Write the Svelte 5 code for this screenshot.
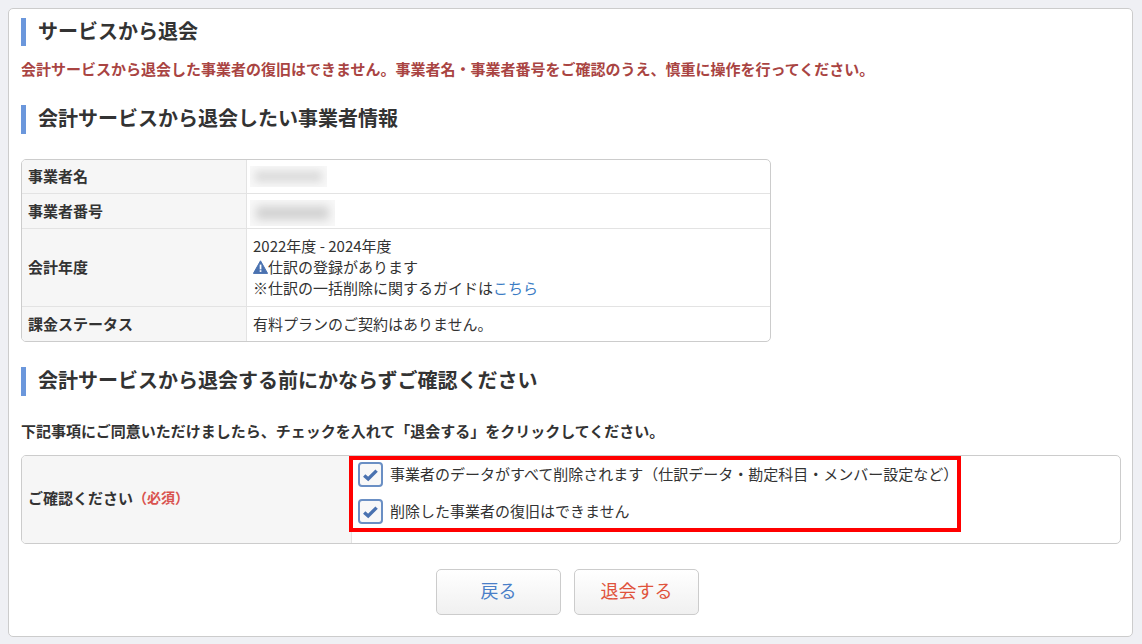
<script>
  const info = [
    { label: '事業者名', blur: 'name' },
    { label: '事業者番号', blur: 'num' }
  ];
  const checks = [
    '事業者のデータがすべて削除されます（仕訳データ・勘定科目・メンバー設定など）',
    '削除した事業者の復旧はできません'
  ];
</script>

<div class="page">
  <main class="card">
    <h2 class="title first">サービスから退会</h2>
    <p class="warn">会計サービスから退会した事業者の復旧はできません。事業者名・事業者番号をご確認のうえ、慎重に操作を行ってください。</p>

    <h2 class="title second">会計サービスから退会したい事業者情報</h2>

    <div class="info">
      {#each info as row}
        <div class="row {row.blur}">
          <div class="th">{row.label}</div>
          <div class="td"><div class="blurred"></div></div>
        </div>
      {/each}
      <div class="row year">
        <div class="th">会計年度</div>
        <div class="td lines">
          <div>2022年度 - 2024年度</div>
          <div class="alert">
            <svg width="15" height="14" viewBox="0 0 15 14" aria-hidden="true">
              <path d="M7.5 0.8 14.6 13.4H0.4Z" fill="#4a72b0" stroke="#4a72b0" stroke-linejoin="round" />
              <rect x="6.7" y="4.6" width="1.7" height="4.8" fill="#fff" />
              <rect x="6.7" y="10.2" width="1.7" height="1.7" fill="#fff" />
            </svg>仕訳の登録があります
          </div>
          <div>※仕訳の一括削除に関するガイドは<a href="#guide">こちら</a></div>
        </div>
      </div>
      <div class="row bill">
        <div class="th">課金ステータス</div>
        <div class="td">有料プランのご契約はありません。</div>
      </div>
    </div>

    <h2 class="title third">会計サービスから退会する前にかならずご確認ください</h2>
    <p class="lead">下記事項にご同意いただけましたら、チェックを入れて「退会する」をクリックしてください。</p>

    <div class="confirm">
      <div class="th">ご確認ください<span class="req">（必須）</span></div>
      <div class="td">
        <div class="highlight"></div>
        {#each checks as text}
          <label class="check">
            <input type="checkbox" checked />
            <span class="box">
              <svg width="17" height="14" viewBox="0 0 17 14" aria-hidden="true">
                <path d="M2.2 7.4 6.2 11 14.6 2.6" fill="none" stroke="#4a72b0" stroke-width="3.4" />
              </svg>
            </span>
            <span class="check-text">{text}</span>
          </label>
        {/each}
      </div>
    </div>

    <div class="actions">
      <button class="btn back">戻る</button>
      <button class="btn leave">退会する</button>
    </div>
  </main>
</div>

<style>
  :global(body) {
    margin: 0;
    background: #eff0f4;
  }

  .page {
    padding: 8px 9px 7px 8px;
    font-family: "Noto Sans CJK JP", sans-serif;
    font-size: 15px;
    line-height: 21px;
    color: #333;
  }

  .card {
    box-sizing: border-box;
    height: 629px;
    padding: 9px 11px 0 12px;
    background: #fff;
    border: 1px solid #ccc;
    border-radius: 5px;
  }

  .title {
    margin: 0;
    padding: 0 0 3px 12px;
    border-left: 5px solid #6b97dc;
    font-size: 20px;
    line-height: 26px;
    font-weight: 700;
    color: #333;
  }

  .first {
    padding-bottom: 2px;
  }

  .warn {
    margin: 12px 0 0;
    font-weight: 700;
    color: #a94442;
    white-space: nowrap;
  }

  .second {
    margin-top: 26px;
  }

  .info {
    box-sizing: border-box;
    width: 750px;
    margin-top: 25px;
    border: 1px solid #ccc;
    border-radius: 5px;
    overflow: hidden;
  }

  .row {
    display: flex;
    border-top: 1px solid #e3e3e3;
  }

  .row:first-child {
    border-top: 0;
  }

  .name {
    height: 33px;
  }

  .num {
    height: 34px;
  }

  .year {
    height: 77px;
  }

  .bill {
    height: 34px;
  }

  .th {
    display: flex;
    align-items: center;
    box-sizing: border-box;
    flex: none;
    width: 225px;
    padding: 0 0 2px 6px;
    background: #f6f6f6;
    border-right: 1px solid #e3e3e3;
    font-weight: 700;
  }

  .td {
    display: flex;
    align-items: center;
    box-sizing: border-box;
    flex: 1;
    min-width: 0;
    padding: 0 0 2px 6px;
  }

  .td.lines {
    display: block;
    padding-top: 6px;
  }

  .blurred {
    width: 77px;
    height: 21px;
    margin: 2px 0 0 -3px;
    background: #dadada;
    box-shadow: inset 0 0 9px 5px #f8f8f8;
  }

  .num .blurred {
    width: 85px;
    height: 26px;
    margin-top: 5px;
    background: #d2d2d2;
    box-shadow: inset 0 0 10px 6px #f8f8f8;
  }

  .alert {
    display: flex;
    align-items: center;
  }

  .alert svg {
    flex: none;
  }

  a {
    color: #3b7cc4;
    text-decoration: none;
  }

  .third {
    margin-top: 25px;
  }

  .lead {
    margin: 24px 0 0;
    font-weight: 700;
    white-space: nowrap;
  }

  .confirm {
    box-sizing: border-box;
    display: flex;
    height: 89px;
    margin-top: 14px;
    border: 1px solid #ccc;
    border-radius: 5px;
    overflow: hidden;
  }

  .confirm .th {
    width: 330px;
    padding: 0 0 4px 6px;
  }

  .req {
    color: #d9534f;
    font-size: 14px;
  }

  .confirm .td {
    position: relative;
    display: block;
    padding: 6px 0 0 6px;
  }

  .highlight {
    position: absolute;
    left: -3px;
    top: 0;
    width: 604px;
    height: 68px;
    border: 4px solid #f00;
    pointer-events: none;
  }

  .check {
    display: flex;
    align-items: center;
    gap: 7px;
    height: 25px;
    margin-bottom: 12px;
    white-space: nowrap;
  }

  .check-text {
    padding-bottom: 2px;
  }

  .check input {
    display: none;
  }

  .box {
    box-sizing: border-box;
    display: flex;
    align-items: center;
    justify-content: center;
    width: 25px;
    height: 25px;
    flex: none;
    background: #f8f8f8;
    border: 2px solid #6a8fc4;
    border-radius: 4px;
  }

  .actions {
    display: flex;
    justify-content: center;
    gap: 13px;
    margin-top: 25px;
    padding-right: 7px;
  }

  .btn {
    width: 125px;
    height: 46px;
    padding: 0 0 4px;
    background: linear-gradient(#fff, #f0f0f0);
    border: 1px solid #ccc;
    border-radius: 5px;
    font: inherit;
    font-size: 18px;
  }

  .back {
    color: #4a7fc8;
  }

  .leave {
    color: #e0533c;
  }
</style>
